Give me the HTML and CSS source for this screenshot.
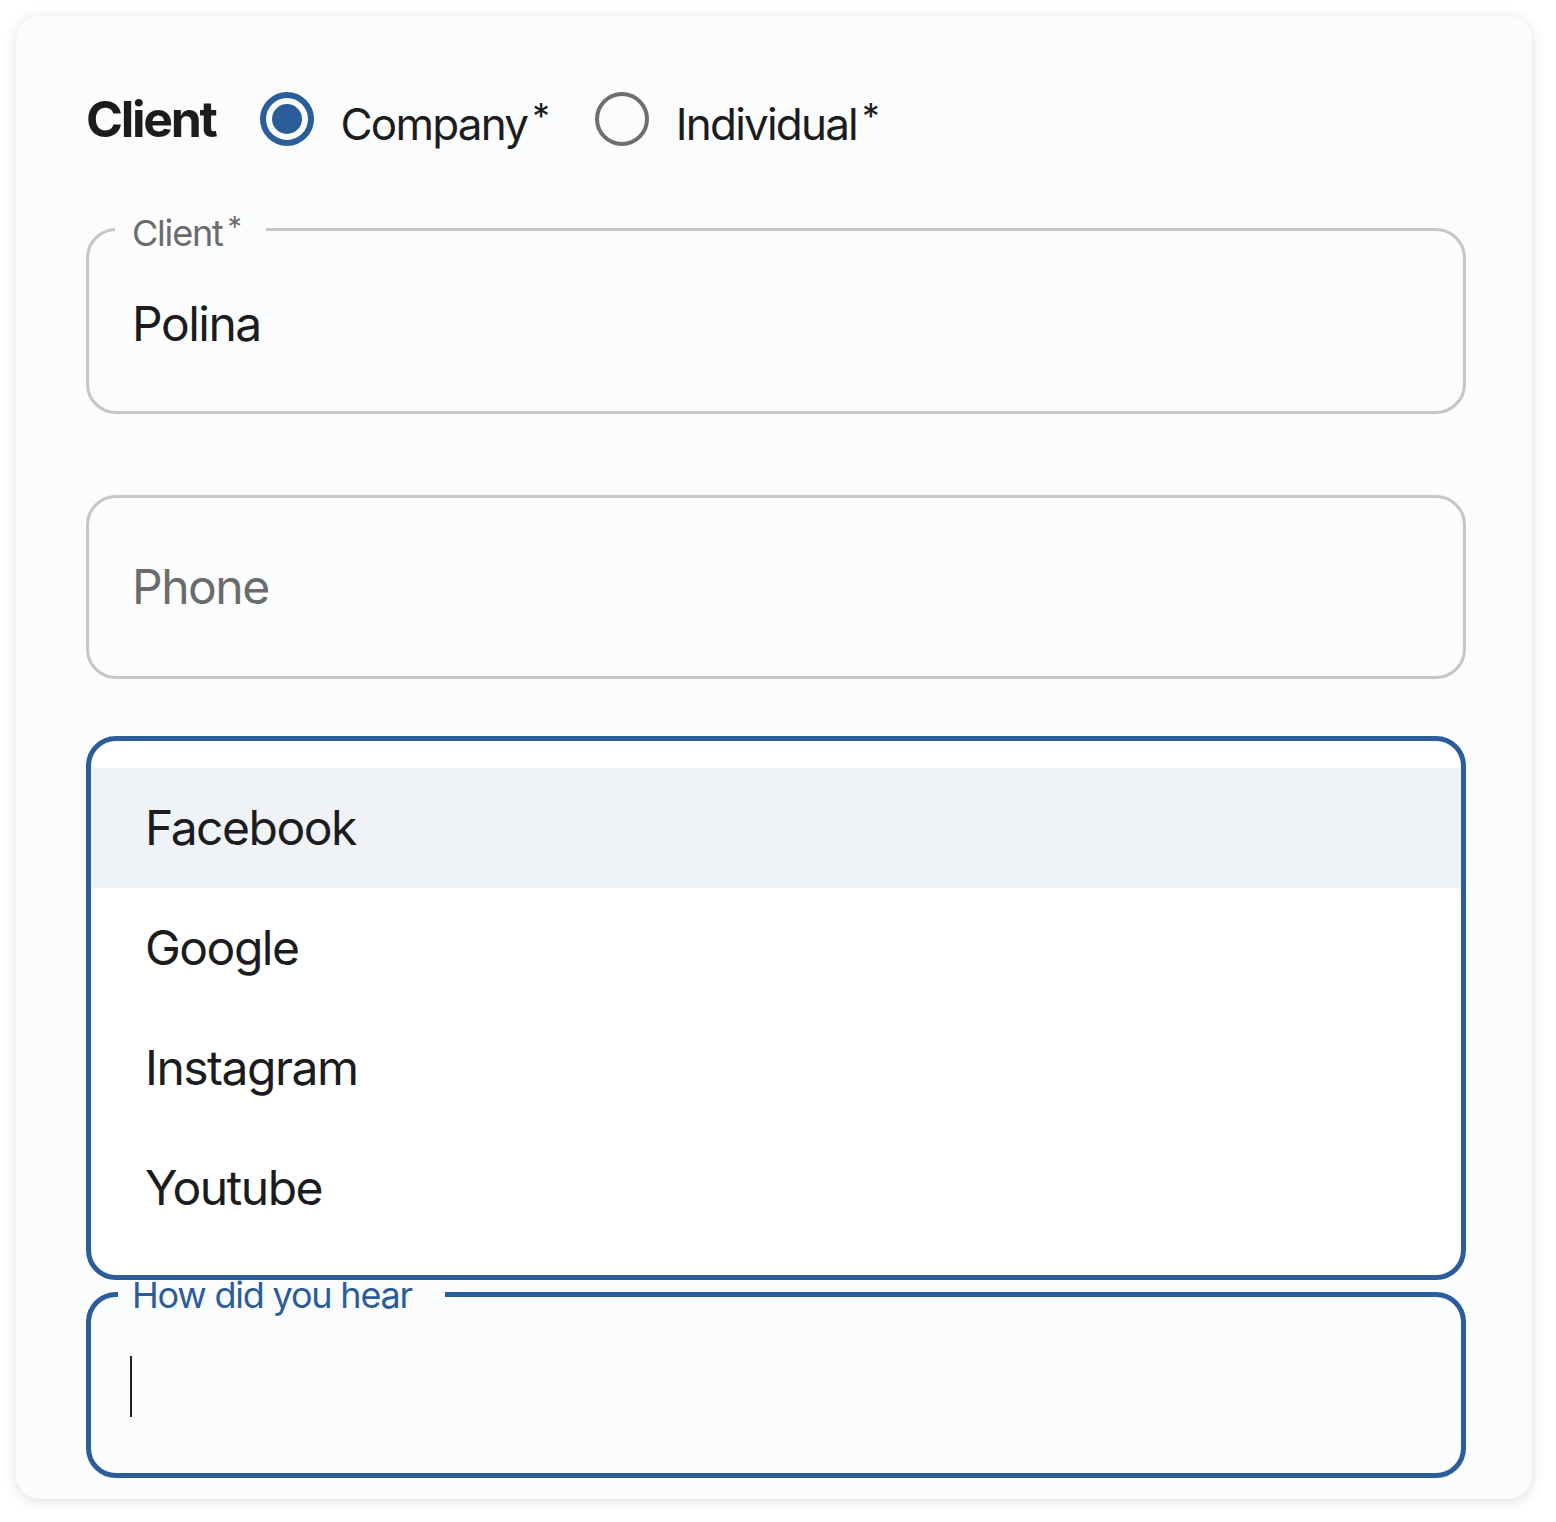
FILE: index.html
```html
<!DOCTYPE html>
<html lang="en">
<head>
<meta charset="UTF-8">
<meta name="viewport" content="width=device-width, initial-scale=1.0">
<title>Client</title>
<link rel="stylesheet" href="styles.css">
</head>
<body>
<div class="card">
  <div class="client-type">
    <span class="title">Client</span>
    <label class="option">
      <span class="radio checked"><span class="dot"></span></span>
      <span class="option-text">Company<span class="req">*</span></span>
    </label>
    <label class="option">
      <span class="radio"></span>
      <span class="option-text">Individual<span class="req">*</span></span>
    </label>
  </div>

  <fieldset class="field">
    <legend>Client<span class="req">*</span></legend>
    <div class="value">Polina</div>
  </fieldset>

  <div class="field plain">
    <span class="placeholder">Phone</span>
  </div>

  <ul class="menu">
    <li class="active">Facebook</li>
    <li>Google</li>
    <li>Instagram</li>
    <li>Youtube</li>
  </ul>

  <fieldset class="field focused">
    <legend>How did you hear</legend>
    <div class="value"><span class="caret"></span></div>
  </fieldset>
</div>
</body>
</html>
```

FILE: styles.css
```css
body {
  margin: 0;
  padding: 16px;
  background-color: #fff;
  font-family: Inter, "Noto Sans", sans-serif;
  color: #1c1c1e;
}

.card {
  width: 1516px;
  box-sizing: border-box;
  padding: 73px 66px 21px 70px;
  background-color: #fbfcfe;
  border-radius: 24px;
  box-shadow: 0 2px 14px rgba(0, 0, 0, 0.13);
}

/* header with radio buttons */
.client-type {
  display: flex;
  align-items: center;
  height: 60px;
}

.title {
  font-size: 50px;
  font-weight: 700;
  letter-spacing: -2.3px;
  margin-right: 44px;
}

.option {
  display: flex;
  align-items: center;
  margin-right: 45px;
}

.radio {
  width: 54px;
  height: 54px;
  box-sizing: border-box;
  border: 4px solid #6e6e6e;
  border-radius: 50%;
  margin-right: 27px;
}

.radio.checked {
  border: 6px solid #2a5d9a;
  padding: 6px;
}

.dot {
  display: block;
  width: 30px;
  height: 30px;
  border-radius: 50%;
  background-color: #2a5d9a;
}

.option-text {
  font-size: 44px;
  letter-spacing: -1.8px;
  line-height: 1;
  padding-top: 6px;
}

.req {
  font-size: 0.8em;
  vertical-align: 0.3em;
  margin-left: 5px;
  letter-spacing: 0;
}

/* outlined fields */
.field {
  margin: 60px 0 0;
  padding: 0 0 0 26px;
  border: 3px solid #c6c6c6;
  border-radius: 30px;
  min-width: 0;
}

.field legend {
  padding: 0 24px 0 17px;
  font-size: 36px;
  line-height: 36px;
  color: #6b6b6b;
  letter-spacing: -1.2px;
}

.field .value {
  padding: 48px 0 62px 17px;
  font-size: 48px;
  line-height: 50px;
  letter-spacing: -1.5px;
}

.field.plain {
  margin-top: 81px;
  height: 184px;
  box-sizing: border-box;
  display: flex;
  align-items: center;
  padding-left: 43px;
}

.placeholder {
  font-size: 48px;
  letter-spacing: -1.5px;
  color: #6b6b6b;
}

/* dropdown list */
.menu {
  list-style: none;
  margin: 57px 0 0;
  padding: 27px 0 27px;
  border: 5px solid #2a5d9a;
  border-radius: 30px;
  background-color: #fff;
}

.menu li {
  height: 120px;
  display: flex;
  align-items: center;
  padding-left: 54px;
  font-size: 48px;
  letter-spacing: -1.5px;
}

.menu li.active {
  background-color: #eff2f6;
}

.field.focused {
  margin-top: -3px;
  border: 5px solid #2a5d9a;
  padding-left: 27px;
}

.field.focused legend {
  color: #2a5d9a;
  padding: 0 33px 0 14px;
}

.field.focused .value {
  padding: 43px 0 56px 12px;
  line-height: 0;
}

.caret {
  display: inline-block;
  width: 2px;
  height: 61px;
  background-color: #222;
}
```
